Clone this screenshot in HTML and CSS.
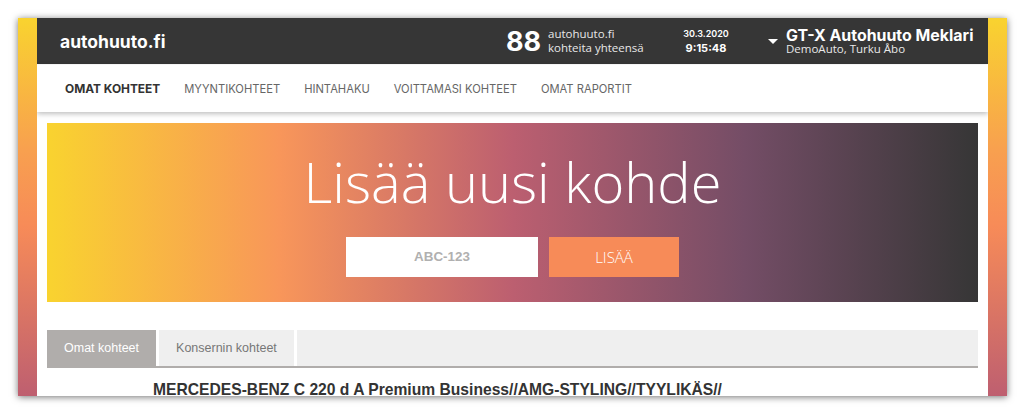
FILE: index.html
```html
<!DOCTYPE html>
<html lang="fi">

<head>
	<meta charset="UTF-8">
	<title>autohuuto.fi</title>
	<link rel="stylesheet" href="styles.css">
</head>

<body>
	<div class="window">
		<div class="page">
			<header class="top">
				<div class="logo">autohuuto.fi</div>
				<div class="count">
					<span class="count-num">88</span>
					<span class="count-text">autohuuto.fi<br>kohteita yhteensä</span>
				</div>
				<div class="clock">
					<span>30.3.2020</span>
					<b>9:15:48</b>
				</div>
				<div class="arrow"></div>
				<div class="user">
					<b>GT-X Autohuuto Meklari</b>
					<span>DemoAuto, Turku Åbo</span>
				</div>
			</header>

			<nav class="menu">
				<a class="active">OMAT KOHTEET</a>
				<a>MYYNTIKOHTEET</a>
				<a>HINTAHAKU</a>
				<a>VOITTAMASI KOHTEET</a>
				<a>OMAT RAPORTIT</a>
			</nav>

			<section class="hero">
				<h1>Lisää uusi kohde</h1>
				<form class="add">
					<div class="plate">ABC-123</div>
					<div class="add-btn">LISÄÄ</div>
				</form>
			</section>

			<div class="tabs">
				<div class="tab selected">Omat kohteet</div>
				<div class="tab">Konsernin kohteet</div>
				<div class="tab-fill"></div>
			</div>

			<h2 class="item-title">MERCEDES-BENZ C 220 d A Premium Business//AMG-STYLING//TYYLIKÄS//</h2>
		</div>
	</div>
</body>

</html>
```

FILE: styles.css
```css
body {
	margin: 0;
	height: 413px;
	overflow: hidden;
	background-color: white;
}

.window {
	margin: 18px 17px 0 18px;
	height: 378px;
	padding: 0 19px;
	background: linear-gradient(to bottom, #f9d32f 0%, #f8a04f 35%, #f78b58 55%, #be5f70 100%);
	box-shadow: 0 1px 7px rgba(0, 0, 0, 0.55);
}

.page {
	height: 378px;
	overflow: hidden;
	background-color: white;
}

.top {
	display: flex;
	align-items: center;
	height: 46px;
	background-color: #363636;
	color: white;
	font-family: Inter, "Open Sans", sans-serif;
}

.logo {
	margin-left: 23px;
	font-size: 17.5px;
	font-weight: 700;
	width: 446px;
	white-space: nowrap;
}

.count {
	display: flex;
	align-items: center;
	width: 176px;
}

.count-num {
	font-size: 27px;
	font-weight: 700;
	width: 42px;
}

.count-text {
	font-family: "Open Sans", sans-serif;
	font-size: 11.5px;
	line-height: 14px;
	color: #e8e8e8;
}

.clock {
	display: flex;
	flex-direction: column;
	align-items: center;
	width: 48px;
	font-size: 9px;
	line-height: 14px;
	font-weight: 600;
}

.clock b {
	font-size: 11px;
	font-weight: 700;
}

.arrow {
	margin-left: 38px;
	width: 0;
	height: 0;
	border-left: 5px solid transparent;
	border-right: 5px solid transparent;
	border-top: 5px solid white;
}

.user {
	display: flex;
	flex-direction: column;
	margin-left: 8px;
	white-space: nowrap;
}

.user b {
	font-size: 15.9px;
	line-height: 15px;
	font-weight: 700;
}

.user span {
	font-family: "Open Sans", sans-serif;
	font-size: 11.5px;
	line-height: 12px;
	color: #e8e8e8;
}

.menu {
	display: flex;
	align-items: center;
	gap: 24px;
	height: 47px;
	margin-top: 1px;
	padding-left: 28px;
	background-color: white;
	box-shadow: 0 2px 5px rgba(0, 0, 0, 0.25);
	font-family: Inter, "Open Sans", sans-serif;
	font-size: 11.2px;
	color: #666;
}

.menu .active {
	font-size: 11.9px;
	font-weight: 700;
	color: #333;
}

.hero {
	margin: 11px 10px 0 10px;
	height: 179px;
	background: linear-gradient(to right, #f9d32f 0%, #f8965a 25%, #bc5f70 50%, #744d66 75%, #363636 100%);
	text-align: center;
	overflow: hidden;
}

.hero h1 {
	margin: 23px 0 0 0;
	font-family: "Open Sans", sans-serif;
	font-size: 56px;
	line-height: 70px;
	font-weight: 300;
	color: white;
}

.add {
	display: flex;
	justify-content: center;
	gap: 11px;
	margin-top: 21px;
}

.plate {
	width: 192px;
	height: 40px;
	line-height: 40px;
	background-color: white;
	font-family: "Liberation Sans", sans-serif;
	font-size: 13.4px;
	font-weight: 700;
	color: #b0b0b0;
}

.add-btn {
	width: 130px;
	height: 40px;
	line-height: 40px;
	background-color: #f78b58;
	font-family: "Open Sans", sans-serif;
	font-size: 15px;
	font-weight: 300;
	color: white;
}

.tabs {
	display: flex;
	gap: 3px;
	height: 36px;
	margin: 28px 10px 0 10px;
	border-bottom: 2px solid #b0adab;
	font-family: "Liberation Sans", sans-serif;
	font-size: 12.5px;
}

.tab {
	padding: 0 17px;
	line-height: 36px;
	background-color: #efefef;
	color: #777;
}

.tab.selected {
	background-color: #b0adab;
	color: white;
}

.tab-fill {
	flex: 1;
	background-color: #efefef;
}

.item-title {
	margin: 12px 0 0 116px;
	font-family: "Liberation Sans", sans-serif;
	font-size: 15.65px;
	line-height: 20px;
	font-weight: 700;
	color: #333;
	white-space: nowrap;
}
```
